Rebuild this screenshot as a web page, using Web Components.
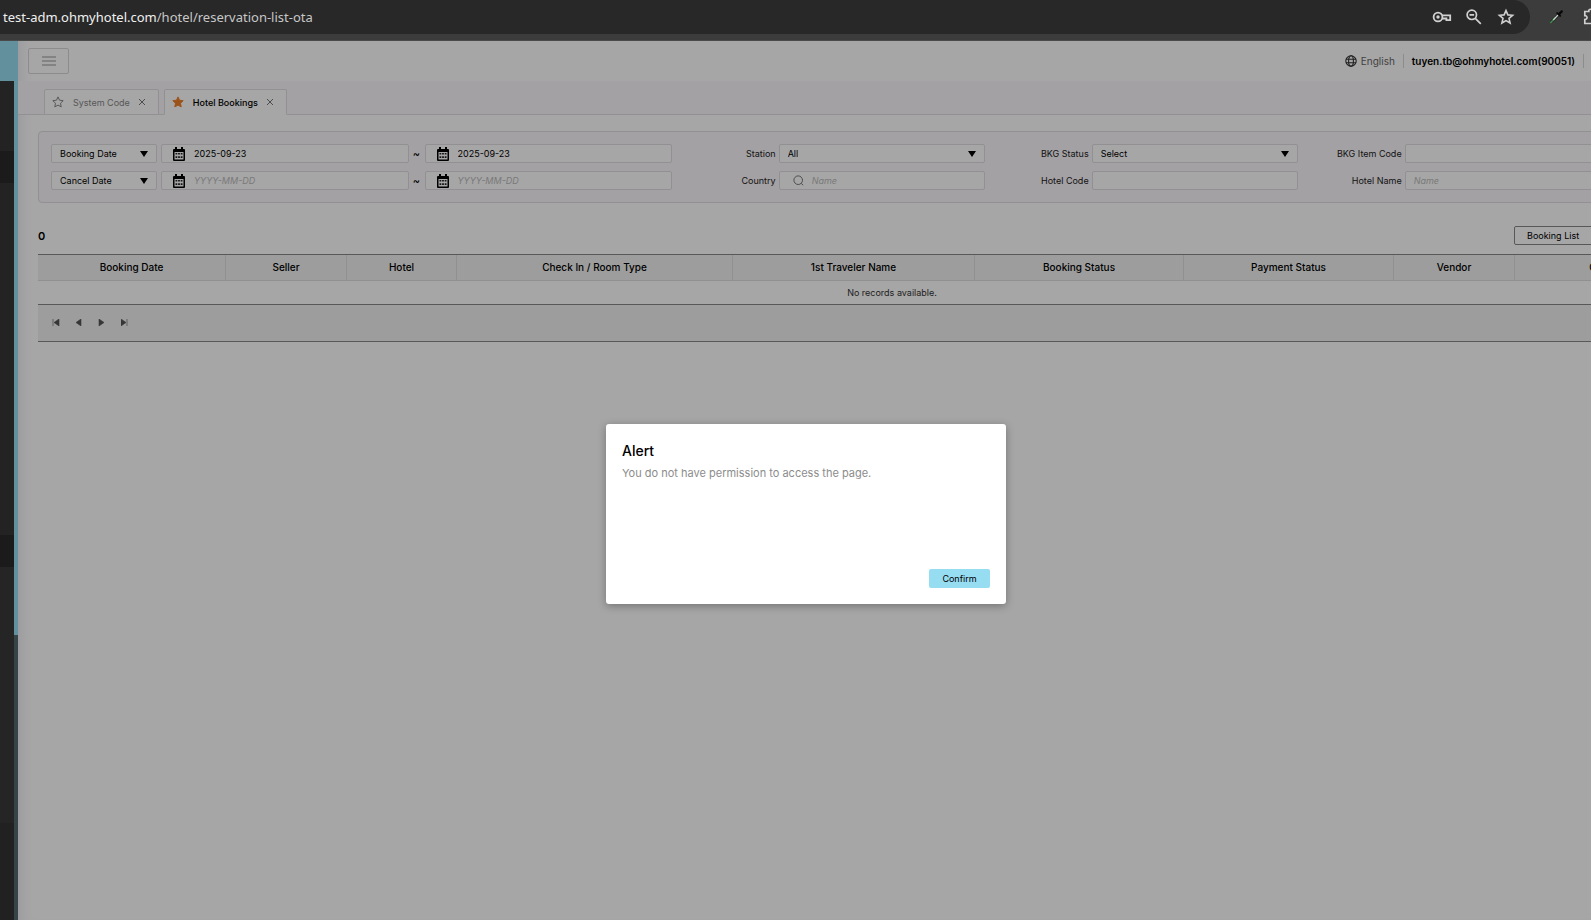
<!DOCTYPE html>
<html lang="en">
<head>
<meta charset="utf-8">
<title>Hotel Bookings</title>
<style>
    html, body {
        height: 100%;
        margin: 0;
    }
    body {
        display: flex;
        flex-direction: column;
        overflow: hidden;
        background: #fff;
        color: #000;
        font-family: Inter, "Liberation Sans", sans-serif;
        font-size: 9px;
        --line: #e0dde0;
        --tint: #fbf7fb;
        --brand: #97ddf2;
    }
</style>
</head>
<body>
<browser-bar></browser-bar>
<admin-page>
    <side-rail slot="side"></side-rail>
    <top-header user="tuyen.tb@ohmyhotel.com(90051)"></top-header>
    <tab-strip>
        <page-tab>System Code</page-tab>
        <page-tab active>Hotel Bookings</page-tab>
    </tab-strip>
    <filter-panel></filter-panel>
    <booking-grid></booking-grid>
    <alert-dialog slot="overlay" heading="Alert">You do not have permission to access the page.</alert-dialog>
</admin-page>

<script>
// small helper shared by all elements
class BaseElement extends HTMLElement {
    constructor() {
        super();
        this.attachShadow({ mode: 'open' });
    }

    connectedCallback() {
        this.shadowRoot.innerHTML = `
            <style>
                *, *::before, *::after { box-sizing: border-box; }
                button, input, select { font: inherit; color: inherit; margin: 0; }
                button { cursor: pointer; }
                svg { display: block; }
            </style>
            ${this.render()}
        `;
    }
}

// address bar of the browser
class BrowserBar extends BaseElement {
    render() {
        return `
            <style>
                :host {
                    display: flex;
                    flex: none;
                    height: 41px;
                    overflow: hidden;
                    background: #3c3c3c;
                    border-bottom: 1px solid #4a4a4a;
                    box-sizing: border-box;
                    color: #c7c7c7;
                }
                .omnibox {
                    flex: 1;
                    display: flex;
                    align-items: center;
                    height: 34px;
                    padding: 0 14px 0 3px;
                    border-radius: 0 17px 17px 0;
                    background: #282828;
                }
                .url {
                    flex: 1;
                    font: 13px "Noto Sans", "Open Sans", sans-serif;
                    color: #c7c7c7;
                }
                .url b { font-weight: 400; color: #f0f0f0; }
                .icons { display: flex; gap: 12px; }
                button {
                    display: grid;
                    place-items: center;
                    width: 20px;
                    height: 20px;
                    padding: 0;
                    border: 0;
                    background: none;
                    color: #d0d0d0;
                }
                .extensions {
                    flex: none;
                    display: flex;
                    align-items: center;
                    gap: 16px;
                    width: 61px;
                    height: 34px;
                    padding-left: 16px;
                }
                .extensions button { flex: none; }
            </style>
            <div class="omnibox">
                <span class="url"><b>test-adm.ohmyhotel.com</b>/hotel/reservation-list-ota</span>
                <div class="icons">
                    <button aria-label="Passwords">
                        <svg width="20" height="20" viewBox="0 0 20 20" fill="none" stroke="currentColor" stroke-width="1.8">
                            <circle cx="6" cy="10" r="4.4"/><circle cx="6" cy="10" r="1.7" fill="currentColor" stroke="none"/>
                            <path d="M10 8.300h8.200v4.900h-3.800v-1.700H10"/>
                        </svg>
                    </button>
                    <button aria-label="Zoom">
                        <svg width="20" height="20" viewBox="0 0 20 20" fill="none" stroke="currentColor" stroke-width="1.7">
                            <circle cx="7.8" cy="7.8" r="4.7"/><path d="M11.3 11.3l5.5 5.5M5.5 7.8h4.6"/>
                        </svg>
                    </button>
                    <button aria-label="Bookmark">
                        <svg width="20" height="20" viewBox="0 0 20 20" fill="none" stroke="currentColor" stroke-width="1.6">
                            <path d="M10 3.6l1.9 4.3 4.7.4-3.6 3.1 1.1 4.6-4.1-2.4L5.9 16 7 11.4 3.4 8.3l4.7-.4z"/>
                        </svg>
                    </button>
                </div>
            </div>
            <div class="extensions">
                <button aria-label="Color picker">
                    <svg width="16" height="16" viewBox="0 0 16 16">
                        <path d="M2.2 14L3 11.2l6.3-6.3 2 2L5 13.1z" fill="#222"/>
                        <path d="M2.4 14l5-5.5" stroke="#3f8f50" stroke-width="1.4"/>
                        <path d="M5.2 11L10 6" stroke="#c5d5c8" stroke-width="1.2"/>
                        <path d="M8 4l1.1-1.1 1.4 1L13 1.5c1.2-.8 2.4.5 1.7 1.7l-2.4 2.4 1 1.3-1.2 1.2z" fill="#080808"/>
                    </svg>
                </button>
                <button aria-label="Extensions">
                    <svg width="20" height="20" viewBox="0 0 20 20" fill="none" stroke="currentColor" stroke-width="1.7">
                        <path d="M2.8 4.5h4c-.5-3 3.8-3 3.4 0h4.3v4.2c3-.5 3 3.9 0 3.4v4.4H2.8v-4c3 .2 3-4 0-3.8z"/>
                    </svg>
                </button>
            </div>
        `;
    }
}

// page frame: rail on the left, content on the right, overlay on top.
// the content is wider than the window and is cut at its right edge
class AdminPage extends BaseElement {
    render() {
        return `
            <style>
                :host {
                    position: relative;
                    flex: 1;
                    display: flex;
                    min-height: 0;
                    overflow: hidden;
                }
                main {
                    flex: 1;
                    min-width: 0;
                    box-shadow: inset 12px 0 12px -8px #eeecf4;
                }
            </style>
            <slot name="side"></slot>
            <main><slot></slot></main>
            <slot name="overlay"></slot>
        `;
    }
}

class SideRail extends BaseElement {
    render() {
        return `
            <style>
                :host {
                    flex: none;
                    display: flex;
                    flex-direction: column;
                    width: 18px;
                    background: #363636;
                }
                .brand { height: 40px; background: var(--brand); }
                .body { flex: 1; display: flex; }
                nav { flex: 1; display: flex; flex-direction: column; }
                .closed { height: 32px; background: #2a2a2a; }
                .head { height: 70px; }
                .group { height: 352px; }
                .sub { height: 256px; background: #393939; }
                .rest { flex: 1; background: #333; }
                .scroll { width: 4px; background: #54696f; }
                .thumb { height: 66%; background: var(--brand); }
            </style>
            <div class="brand"></div>
            <div class="body">
                <nav>
                    <div class="head"></div>
                    <div class="closed"></div>
                    <div class="group"></div>
                    <div class="closed"></div>
                    <div class="sub"></div>
                    <div class="rest"></div>
                </nav>
                <div class="scroll"><div class="thumb"></div></div>
            </div>
        `;
    }
}

class TopHeader extends BaseElement {
    render() {
        return `
            <style>
                :host {
                    display: flex;
                    align-items: center;
                    height: 40px;
                    padding: 0 7px 0 10px;
                    box-sizing: border-box;
                    font-size: 10px;
                }
                .menu {
                    display: grid;
                    place-items: center;
                    width: 41px;
                    height: 26px;
                    margin-right: auto;
                    padding: 0;
                    border: 1px solid #d8d8d8;
                    border-radius: 2px;
                    background: none;
                }
                .lang, .user {
                    display: flex;
                    align-items: center;
                    gap: 4px;
                    height: 14px;
                    padding: 0 8px;
                    border-right: 1px solid #d8d8d8;
                    color: #666;
                    text-decoration: none;
                }
                .user { color: #000; font-weight: 600; }
            </style>
            <button class="menu" aria-label="Menu">
                <svg width="14" height="10" viewBox="0 0 14 10" stroke="#c9c9c9" stroke-width="2"><path d="M0 1h14M0 5h14M0 9h14"/></svg>
            </button>
            <a class="lang" href="#">
                <svg width="12" height="12" viewBox="0 0 12 12" fill="none" stroke="#333" stroke-width="1.1">
                    <circle cx="6" cy="6" r="5.2"/><ellipse cx="6" cy="6" rx="2.4" ry="5.2"/><path d="M1 4.2h10M1 7.8h10"/>
                </svg>
                English
            </a>
            <a class="user" href="#">${this.getAttribute('user')}</a>
        `;
    }
}

class TabStrip extends BaseElement {
    render() {
        return `
            <style>
                :host {
                    display: flex;
                    align-items: flex-end;
                    gap: 5px;
                    height: 34px;
                    padding-left: 26px;
                    box-sizing: border-box;
                    background: var(--tint);
                    box-shadow: inset 0 -1px 0 var(--line);
                }
            </style>
            <slot></slot>
        `;
    }
}

class PageTab extends BaseElement {
    render() {
        const active = this.hasAttribute('active');
        return `
            <style>
                :host {
                    display: flex;
                    align-items: center;
                    height: 26px;
                    padding: 0 12px 0 7px;
                    box-sizing: border-box;
                    border: 1px solid var(--line);
                    border-radius: 2px 2px 0 0;
                    background: #fff;
                    color: #888;
                }
                :host([active]) {
                    border-bottom-color: #fff;
                    color: #000;
                    font-weight: 500;
                }
                a {
                    display: flex;
                    align-items: center;
                    gap: 9px;
                    color: inherit;
                    text-decoration: none;
                }
                button {
                    margin-left: 8px;
                    padding: 0;
                    border: 0;
                    background: none;
                }
            </style>
            <a href="#">
                <svg width="12" height="12" viewBox="0 0 12 12" fill="${active ? '#f08028' : 'none'}" stroke="${active ? '#f08028' : '#888'}">
                    <path d="M6 .9l1.5 3.3 3.7.5-2.7 2.5.7 3.7L6 9.1l-3.2 1.8.7-3.7L.8 4.7l3.7-.5z"/>
                </svg>
                <span><slot></slot></span>
            </a>
            <button aria-label="Close tab">
                <svg width="8" height="8" viewBox="0 0 8 8" stroke="#777"><path d="M1 1l6 6M7 1L1 7"/></svg>
            </button>
        `;
    }
}

// one bordered control: type is select, date, search or text
class FormField extends BaseElement {
    render() {
        const type = this.getAttribute('type') || 'text';
        const label = this.getAttribute('label');
        const value = this.getAttribute('value') || '';
        const hint = this.getAttribute('hint') || '';
        const name = this.getAttribute('name') || label || '';
        const icons = {
            date: `<svg width="12" height="14" viewBox="0 0 12 14"><path d="M2 0h2v2h4V0h2v2h1a1 1 0 0 1 1 1v10a1 1 0 0 1-1 1H1a1 1 0 0 1-1-1V3a1 1 0 0 1 1-1h1z" fill="#000"/><path d="M1.500 5h9v7.500h-9z" fill="#fff"/><path d="M2.500 6h1.800v1.600H2.500zm2.600 0h1.800v1.600H5.100zm2.600 0h1.800v1.600H7.700zM2.500 9.300h1.800v1.600H2.500zm2.600 0h1.800v1.600H5.100zm2.600 0h1.800v1.600H7.700z" fill="#222"/></svg>`,
            search: `<svg width="11" height="11" viewBox="0 0 11 11" fill="none" stroke="#777"><circle cx="5.200" cy="5.200" r="4.300"/><path d="M8.200 8.400l2 1.800"/></svg>`
        };
        const control = type === 'select'
            ? `<select id="control"><option>${value}</option></select>
               <svg class="arrow" width="8" height="6" viewBox="0 0 8 6"><path d="M0 0h8L4 6z"/></svg>`
            : `<input id="control" type="text" value="${value}" placeholder="${hint}">`;
        return `
            <style>
                :host {
                    display: flex;
                    align-items: center;
                    gap: 3px;
                    min-width: 0;
                }
                label {
                    flex: 1;
                    text-align: right;
                    white-space: nowrap;
                    color: #222;
                }
                label[hidden] { display: none; }
                .box {
                    display: flex;
                    align-items: center;
                    width: 100%;
                    height: 19px;
                    border: 1px solid var(--line);
                    border-radius: 2px;
                    background: #fff;
                }
                label:not([hidden]) + .box { width: 67%; }
                .box > svg { flex: none; }
                .date > svg { margin-left: 11px; }
                .search > svg { margin-left: 13px; }
                input, select {
                    flex: 1;
                    align-self: stretch;
                    width: 0;
                    min-width: 0;
                    padding: 0 8px;
                    border: 0;
                    background: none;
                    outline: none;
                    appearance: none;
                }
                .box > .arrow { margin-right: 8px; }
                .date input { padding-left: 9px; }
                input::placeholder { color: #bbb; font-style: italic; opacity: 1; }
            </style>
            <label for="control" ${this.hasAttribute('bare') ? 'hidden' : ''}>${name}</label>
            <div class="box ${type}">${icons[type] || ''}${control}</div>
        `;
    }
}

class FilterPanel extends BaseElement {
    render() {
        return `
            <style>
                :host {
                    display: grid;
                    grid-template-columns: 621fr 308fr 308fr 308fr;
                    gap: 8px 5px;
                    width: calc(100% + 135px);
                    margin: 16px 0 0 20px;
                    padding: 12px 134px 12px 12px;
                    box-sizing: border-box;
                    border: 1px solid var(--line);
                    border-radius: 4px;
                    background: var(--tint);
                }
                .range {
                    display: grid;
                    grid-template-columns: 106px 1fr 8px 1fr;
                    align-items: center;
                    gap: 4px;
                    text-align: center;
                }
                .range span {
                    font-size: 11px;
                    line-height: 16px;
                }
            </style>
            <div class="range">
                <form-field type="select" bare name="Date type" value="Booking Date"></form-field>
                <form-field type="date" bare name="From" value="2025-09-23" hint="YYYY-MM-DD"></form-field>
                <span>~</span>
                <form-field type="date" bare name="To" value="2025-09-23" hint="YYYY-MM-DD"></form-field>
            </div>
            <form-field type="select" label="Station" value="All"></form-field>
            <form-field type="select" label="BKG Status" value="Select"></form-field>
            <form-field label="BKG Item Code"></form-field>
            <div class="range">
                <form-field type="select" bare name="Date type" value="Cancel Date"></form-field>
                <form-field type="date" bare name="From" hint="YYYY-MM-DD"></form-field>
                <span>~</span>
                <form-field type="date" bare name="To" hint="YYYY-MM-DD"></form-field>
            </div>
            <form-field type="search" label="Country" hint="Name"></form-field>
            <form-field label="Hotel Code"></form-field>
            <form-field label="Hotel Name" hint="Name"></form-field>
        `;
    }
}

class BookingGrid extends BaseElement {
    render() {
        const columns = [
            ['Booking Date', 188], ['Seller', 121], ['Hotel', 110], ['Check In / Room Type', 276],
            ['1st Traveler Name', 242], ['Booking Status', 209], ['Payment Status', 210],
            ['Vendor', 121], ['C', 157], ['', 74]
        ];
        const pager = [
            ['First', 'M1 0v7M7 0v7L2 3.500z'], ['Previous', 'M6 0v7L1 3.500z'],
            ['Next', 'M1 0v7l5-3.500z'], ['Last', 'M0 0v7l5-3.500zM6 0v7']
        ];
        return `
            <style>
                :host {
                    display: block;
                    width: calc(100% + 135px);
                    margin: 23px 0 0 20px;
                    box-sizing: border-box;
                }
                .bar {
                    display: flex;
                    align-items: center;
                    justify-content: space-between;
                    margin-bottom: 9px;
                    padding-right: 147px;
                }
                .bar strong { font-size: 11px; font-weight: 600; }
                .bar button {
                    width: 85px;
                    height: 19px;
                    padding: 0 12px;
                    border: 1px solid #888;
                    border-radius: 2px;
                    background: none;
                    text-align: left;
                }
                table {
                    width: 100%;
                    table-layout: fixed;
                    border-collapse: separate;
                    border-spacing: 0;
                    border-top: 1px solid #888;
                }
                th {
                    height: 26px;
                    padding: 0 0 2px;
                    border-right: 1px solid #dedede;
                    border-bottom: 1px solid #dedede;
                    background: #f2f2f2;
                    font-size: 10px;
                    font-weight: 500;
                }
                td {
                    height: 23px;
                    padding: 0;
                    text-align: center;
                    color: #333;
                }
                .pager {
                    display: flex;
                    align-items: center;
                    gap: 15px;
                    height: 38px;
                    padding: 0 0 2px 14px;
                    border: solid #888;
                    border-width: 1px 0;
                    background: #f2f2f2;
                }
                .pager button {
                    padding: 0;
                    border: 0;
                    background: none;
                }
            </style>
            <div class="bar">
                <strong>0</strong>
                <button>Booking List</button>
            </div>
            <table>
                <colgroup>${columns.map(([, width]) => `<col style="width: ${width}px">`).join('')}</colgroup>
                <thead><tr>${columns.map(([title]) => `<th>${title}</th>`).join('')}</tr></thead>
                <tbody><tr><td colspan="${columns.length}">No records available.</td></tr></tbody>
            </table>
            <div class="pager">
                ${pager.map(([name, path]) => `
                    <button aria-label="${name} page">
                        <svg width="8" height="7" viewBox="0 0 8 7" fill="#555" stroke="#555" stroke-width=".6"><path d="${path}"/></svg>
                    </button>
                `).join('')}
            </div>
        `;
    }
}

class AlertDialog extends BaseElement {
    render() {
        return `
            <style>
                :host {
                    position: absolute;
                    inset: 0 -21px -67px 0;
                    display: grid;
                    place-items: center;
                    background: rgba(0, 0, 0, .35);
                }
                dialog {
                    position: static;
                    display: flex;
                    flex-direction: column;
                    width: 400px;
                    min-height: 180px;
                    margin: 0;
                    padding: 16px;
                    border: 0;
                    border-radius: 3px;
                    background: #fff;
                    box-shadow: 0 2px 8px rgba(0, 0, 0, .3);
                }
                h2 {
                    margin: 0 0 3px;
                    font-size: 14px;
                    line-height: 22px;
                    font-weight: 500;
                }
                p {
                    margin: 0;
                    color: #8c8c8c;
                    font-size: 11px;
                    line-height: 16px;
                }
                button {
                    align-self: flex-end;
                    width: 61px;
                    height: 19px;
                    margin-top: auto;
                    padding: 0 0 1px;
                    border: 0;
                    border-radius: 2px;
                    background: var(--brand);
                    color: #000;
                }
            </style>
            <dialog open aria-labelledby="title">
                <h2 id="title">${this.getAttribute('heading')}</h2>
                <p><slot></slot></p>
                <button>Confirm</button>
            </dialog>
        `;
    }
}

customElements.define('browser-bar', BrowserBar);
customElements.define('admin-page', AdminPage);
customElements.define('side-rail', SideRail);
customElements.define('top-header', TopHeader);
customElements.define('tab-strip', TabStrip);
customElements.define('page-tab', PageTab);
customElements.define('form-field', FormField);
customElements.define('filter-panel', FilterPanel);
customElements.define('booking-grid', BookingGrid);
customElements.define('alert-dialog', AlertDialog);
</script>
</body>
</html>
